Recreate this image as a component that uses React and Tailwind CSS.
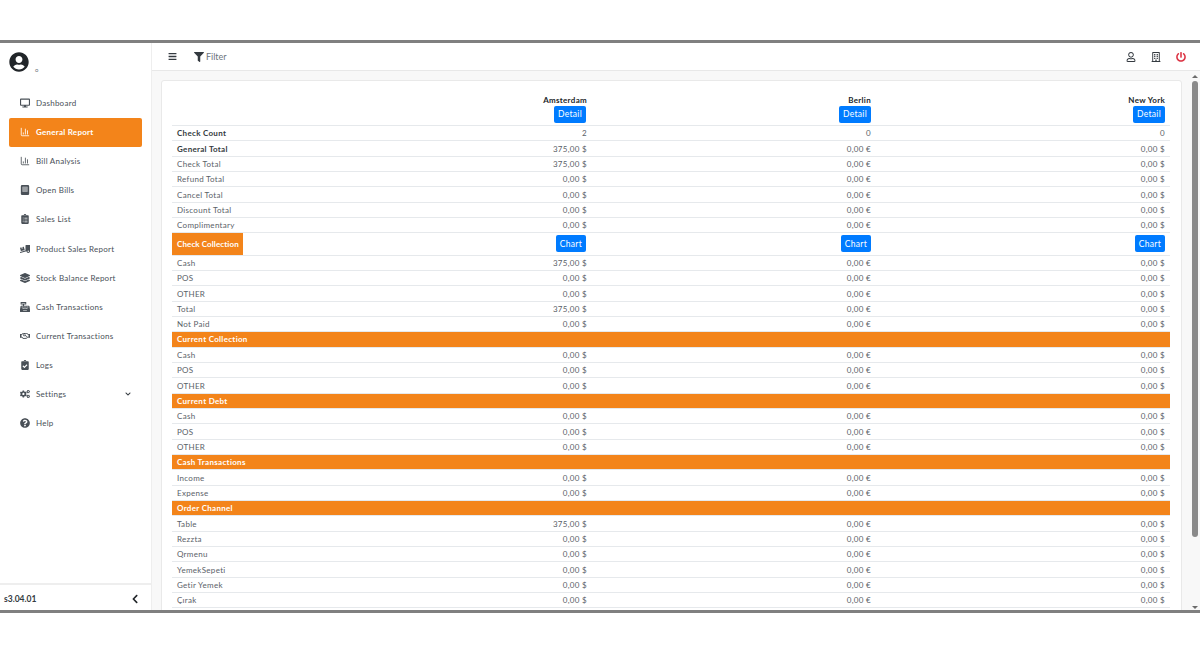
import { FaDesktop, FaClipboardList, FaTruckLoading, FaLayerGroup, FaCashRegister, FaRegHandshake, FaClipboardCheck, FaCogs, FaQuestionCircle, FaChevronDown, FaChevronLeft, FaUserCircle, FaFilter, FaBars, FaRegUser, FaRegBuilding, FaPowerOff } from 'react-icons/fa';
import { LuChartColumn } from 'react-icons/lu';

function BillIcon({ className }) {
  return (
    <svg viewBox="0 0 10 12" className={className} fill="currentColor">
      <path d="M1.5 0h7A1.5 1.5 0 0 1 10 1.5v9A1.5 1.5 0 0 1 8.5 12h-7A1.5 1.5 0 0 1 0 10.5v-9A1.5 1.5 0 0 1 1.5 0zM2 2v6h6V2z" />
      <rect x="2" y="2" width="6" height="6" opacity="0.55" />
    </svg>
  );
}

const menu = [
  { label: 'Dashboard', icon: FaDesktop },
  { label: 'General Report', icon: LuChartColumn, active: true },
  { label: 'Bill Analysis', icon: LuChartColumn },
  { label: 'Open Bills', icon: BillIcon },
  { label: 'Sales List', icon: FaClipboardList },
  { label: 'Product Sales Report', icon: FaTruckLoading },
  { label: 'Stock Balance Report', icon: FaLayerGroup },
  { label: 'Cash Transactions', icon: FaCashRegister },
  { label: 'Current Transactions', icon: FaRegHandshake },
  { label: 'Logs', icon: FaClipboardCheck },
  { label: 'Settings', icon: FaCogs, arrow: true },
  { label: 'Help', icon: FaQuestionCircle },
];

const rows = [
  ['Check Count', '2', '0', '0', 'bold'],
  ['General Total', '375,00 $', '0,00 €', '0,00 $', 'bold'],
  ['Check Total', '375,00 $', '0,00 €', '0,00 $'],
  ['Refund Total', '0,00 $', '0,00 €', '0,00 $'],
  ['Cancel Total', '0,00 $', '0,00 €', '0,00 $'],
  ['Discount Total', '0,00 $', '0,00 €', '0,00 $'],
  ['Complimentary', '0,00 $', '0,00 €', '0,00 $'],
  ['Check Collection', 'chart'],
  ['Cash', '375,00 $', '0,00 €', '0,00 $'],
  ['POS', '0,00 $', '0,00 €', '0,00 $'],
  ['OTHER', '0,00 $', '0,00 €', '0,00 $'],
  ['Total', '375,00 $', '0,00 €', '0,00 $'],
  ['Not Paid', '0,00 $', '0,00 €', '0,00 $'],
  ['Current Collection', 'band'],
  ['Cash', '0,00 $', '0,00 €', '0,00 $'],
  ['POS', '0,00 $', '0,00 €', '0,00 $'],
  ['OTHER', '0,00 $', '0,00 €', '0,00 $'],
  ['Current Debt', 'band'],
  ['Cash', '0,00 $', '0,00 €', '0,00 $'],
  ['POS', '0,00 $', '0,00 €', '0,00 $'],
  ['OTHER', '0,00 $', '0,00 €', '0,00 $'],
  ['Cash Transactions', 'band'],
  ['Income', '0,00 $', '0,00 €', '0,00 $'],
  ['Expense', '0,00 $', '0,00 €', '0,00 $'],
  ['Order Channel', 'band'],
  ['Table', '375,00 $', '0,00 €', '0,00 $'],
  ['Rezzta', '0,00 $', '0,00 €', '0,00 $'],
  ['Qrmenu', '0,00 $', '0,00 €', '0,00 $'],
  ['YemekSepeti', '0,00 $', '0,00 €', '0,00 $'],
  ['Getir Yemek', '0,00 $', '0,00 €', '0,00 $'],
  ['Çırak', '0,00 $', '0,00 €', '0,00 $'],
  ['', '', '', ''],
];

const rowGrid = 'grid grid-cols-[210px_210px_284px_294px] items-center border-t border-[#e6e9ec]';

function BlueButton({ children }) {
  return (
    <button className="h-[17px] px-[4px] bg-[#007bff] text-white text-[8.5px] rounded-[2px] leading-none">
      {children}
    </button>
  );
}

function Row({ row }) {
  const [label, a, b, c, weight] = row;

  if (a === 'band') {
    return (
      <div className="h-[15.33px] bg-[#f3841a] border-t border-[#e6e9ec] flex items-center pl-[5px] text-white font-bold">
        {label}
      </div>
    );
  }

  if (a === 'chart') {
    return (
      <div className={`${rowGrid} h-[22.4px]`}>
        <div className="h-full flex">
          <div className="w-[71px] bg-[#f3841a] text-white font-bold flex items-center pl-[5px] tracking-[0.1px] whitespace-nowrap">{label}</div>
        </div>
        <div className="flex justify-end pr-[6px]">
          <BlueButton>Chart</BlueButton>
        </div>
        <div className="flex justify-end pr-[5px]">
          <BlueButton>Chart</BlueButton>
        </div>
        <div className="flex justify-end pr-[5px]">
          <BlueButton>Chart</BlueButton>
        </div>
      </div>
    );
  }

  return (
    <div className={`${rowGrid} h-[15.33px] pt-[0.5px] text-[#5a6168]`}>
      <div className={`pl-[5px] ${weight ? 'font-bold text-[#343a40]' : ''}`}>{label}</div>
      <div className="text-right pr-[5px]">{a}</div>
      <div className="text-right pr-[5px]">{b}</div>
      <div className="text-right pr-[5px]">{c}</div>
    </div>
  );
}

export default function App() {
  return (
    <div className="h-[653px] bg-white pt-[40px] overflow-hidden font-['Lato',sans-serif]">
      <div className="h-[573px] border-y-[3px] border-[#808080] flex overflow-hidden">
        <aside className="w-[152px] shrink-0 bg-white border-r border-[#eeeeee] flex flex-col">
          <div className="h-[46px] pt-[9px] pl-[9px] flex items-start">
            <FaUserCircle className="text-[20px] text-[#212529]" />
            <span className="mt-[13px] ml-[6px] text-[6px] text-[#6c757d]">o</span>
          </div>
          <nav className="flex-1 pl-[9px] pr-[9px] flex flex-col">
            {menu.map((item) => {
              const Icon = item.icon;
              return (
                <div
                  key={item.label}
                  className={`h-[29.1px] shrink-0 flex items-center pl-[11px] pr-[11px] pb-[1px] rounded-[2px] text-[8px] tracking-[0.25px] ${
                    item.active ? 'bg-[#f3841a] text-white font-bold' : 'text-[#495057]'
                  }`}
                >
                  <Icon className={`w-[10px] h-[10px] mr-[6px] shrink-0 ${item.active ? '' : 'text-[#495057]'}`} />
                  <span className="flex-1 whitespace-nowrap">{item.label}</span>
                  {item.arrow && <FaChevronDown className="text-[6px] text-[#343a40]" />}
                </div>
              );
            })}
          </nav>
          <div className="h-[27px] border-t-2 border-[#eeeeee] flex items-center justify-between pl-[4px] pr-[11px] pt-[3px] text-[8.5px] text-[#343a40] font-bold">
            <span>s3.04.01</span>
            <FaChevronLeft className="text-[10px] text-[#212529]" />
          </div>
        </aside>

        <div className="flex-1 min-w-0 flex flex-col bg-[#f8f8f8]">
          <header className="h-[28px] shrink-0 bg-white border-b border-[#e8e8e8] flex items-center pl-[16px] pr-[14px]">
            <FaBars className="text-[9px] text-[#343a40]" />
            <FaFilter className="ml-[17px] text-[10px] text-[#343a40]" />
            <span className="ml-[2px] text-[9px] text-[#6c757d]">Filter</span>
            <div className="ml-auto flex items-center gap-[15px] text-[10px]">
              <FaRegUser className="text-[#343a40]" />
              <FaRegBuilding className="text-[#343a40]" />
              <FaPowerOff className="text-[#dc3545]" />
            </div>
          </header>

          <div className="flex-1 min-h-0 flex">
            <div className="flex-1 min-w-0 pl-[9px] pr-[8px] pt-[9px]">
              <div className="bg-white border border-[#e9e9e9] rounded-[3px] pl-[10px] pr-[11px] pt-[14px] text-[8px] tracking-[0.3px]">
                <div className="grid grid-cols-[420px_284px_294px] h-[30px] text-[#212529] font-bold">
                  <div className="flex flex-col items-end pr-[5px]">
                    <span className="leading-[11px]">Amsterdam</span>
                    <span className="font-normal mr-[1px]"><BlueButton>Detail</BlueButton></span>
                  </div>
                  <div className="flex flex-col items-end pr-[5px]">
                    <span className="leading-[11px]">Berlin</span>
                    <span className="font-normal"><BlueButton>Detail</BlueButton></span>
                  </div>
                  <div className="flex flex-col items-end pr-[5px]">
                    <span className="leading-[11px]">New York</span>
                    <span className="font-normal"><BlueButton>Detail</BlueButton></span>
                  </div>
                </div>
                {rows.map((row, i) => (
                  <Row key={i} row={row} />
                ))}
              </div>
            </div>
            <div className="w-[10px] shrink-0 bg-[#f8f8f8] flex flex-col items-center pt-[4px] pb-[1px]">
              <div className="w-0 h-0 border-x-[3px] border-x-transparent border-b-[3px] border-b-[#6b6b6b]" />
              <div className="mt-[3px] w-[6px] h-[456px] rounded-full bg-[#8a8a8a]" />
              <div className="mt-auto w-0 h-0 border-x-[3px] border-x-transparent border-t-[3px] border-t-[#6b6b6b]" />
            </div>
          </div>
        </div>
      </div>
    </div>
  );
}
